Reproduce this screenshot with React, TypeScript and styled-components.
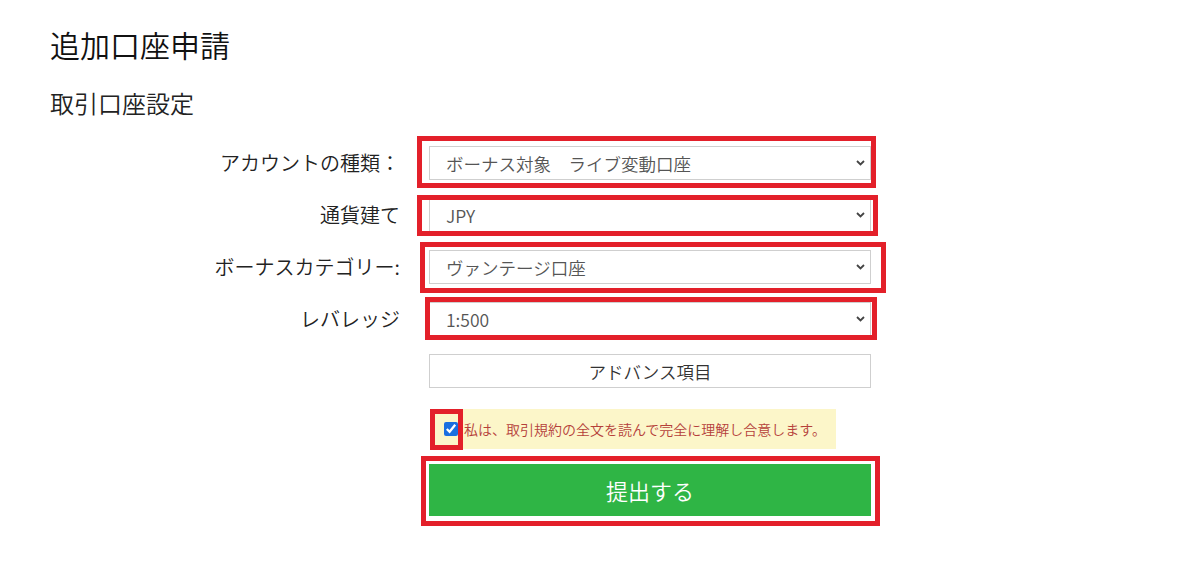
import React from "react";
import styled, { createGlobalStyle } from "styled-components";

const GlobalStyle = createGlobalStyle`
  html, body {
    margin: 0;
    padding: 0;
    background: #ffffff;
  }
  body {
    font-family: "Noto Sans CJK JP", "Noto Sans", sans-serif;
    font-weight: 350;
    color: #222;
  }
`;

const Page = styled.div`
  padding: 29px 0 40px 50px;
  display: flex;
  flex-direction: column;
`;

const Title = styled.h1`
  margin: 0;
  font-size: 30px;
  line-height: 30px;
  font-weight: 350;
  color: #111;
`;

const SubTitle = styled.h2`
  margin: 32px 0 0 0;
  font-size: 24px;
  line-height: 24px;
  font-weight: 350;
  color: #222;
`;

const Form = styled.form`
  margin-top: 31px;
  display: flex;
  flex-direction: column;
  gap: 18px;
`;

const Row = styled.div<{ $mt?: number }>`
  display: grid;
  grid-template-columns: 350px 442px;
  column-gap: 29px;
  align-items: center;
  margin-top: ${(p) => p.$mt ?? 0}px;
`;

const Label = styled.label`
  text-align: right;
  font-size: 20px;
  line-height: 24px;
  color: #222;
  white-space: nowrap;
`;

const Field = styled.div`
  position: relative;
  height: 34px;
`;

const Select = styled.select`
  appearance: none;
  -webkit-appearance: none;
  width: 100%;
  height: 34px;
  box-sizing: border-box;
  border: 1px solid #cfcfcf;
  border-radius: 0;
  background: #fff;
  padding: 0 30px 0 16px;
  font-family: "Noto Sans CJK JP", "Noto Sans", sans-serif;
  font-weight: 350;
  font-size: 17.5px;
  color: #555;
  outline: none;
`;

const Chevron = styled.svg`
  position: absolute;
  right: 6px;
  top: 50%;
  width: 9px;
  height: 6px;
  margin-top: -3px;
  pointer-events: none;
`;

const Highlight = styled.span<{ $t: number; $r: number; $b: number; $l: number }>`
  position: absolute;
  top: ${(p) => p.$t}px;
  right: ${(p) => p.$r}px;
  bottom: ${(p) => p.$b}px;
  left: ${(p) => p.$l}px;
  border: 5px solid #e3202a;
  pointer-events: none;
`;

const AdvancedButton = styled.button`
  width: 100%;
  height: 34px;
  box-sizing: border-box;
  border: 1px solid #cfcfcf;
  border-radius: 0;
  background: #fff;
  font-family: "Noto Sans CJK JP", "Noto Sans", sans-serif;
  font-weight: 350;
  font-size: 17.5px;
  color: #333;
  padding: 0;
  cursor: pointer;
`;

const AgreeBox = styled.div`
  position: relative;
  margin-left: 1px;
  width: 406px;
  height: 40px;
  box-sizing: border-box;
  background: #fcf6c9;
  display: flex;
  align-items: center;
  padding-left: 14px;
  gap: 6px;
`;

const CheckWrap = styled.span`
  position: relative;
  display: flex;
  align-items: center;
`;

const Checkbox = styled.input`
  margin: 0;
  width: 14px;
  height: 14px;
  accent-color: #1a6fe0;
`;

const AgreeText = styled.span`
  font-size: 14px;
  line-height: 16px;
  color: #b5403a;
  white-space: nowrap;
`;

const SubmitField = styled.div`
  position: relative;
  height: 52px;
`;

const SubmitButton = styled.button`
  width: 100%;
  height: 52px;
  border: none;
  border-radius: 0;
  background: #2fb545;
  color: #fff;
  font-family: "Noto Sans CJK JP", "Noto Sans", sans-serif;
  font-weight: 350;
  font-size: 22px;
  cursor: pointer;
  padding: 0;
`;

type Opt = {
  label: string;
  value: string;
  hl: [number, number, number, number];
};

const selects: Opt[] = [
  { label: "アカウントの種類：", value: "ボーナス対象　ライブ変動口座", hl: [-10, -5, -8, -12] },
  { label: "通貨建て", value: "JPY", hl: [-3, -7, -4, -12] },
  { label: "ボーナスカテゴリー:", value: "ヴァンテージ口座", hl: [-8, -15, -9, -9] },
  { label: "レバレッジ", value: "1:500", hl: [-5, -6, -4, -4] },
];

const ChevronIcon = () => (
  <Chevron viewBox="0 0 9 6">
    <path d="M1 1 L4.5 4.5 L8 1" fill="none" stroke="#444" strokeWidth="1.8" />
  </Chevron>
);

export default function App() {
  return (
    <>
      <GlobalStyle />
      <Page>
        <Title>追加口座申請</Title>
        <SubTitle>取引口座設定</SubTitle>
        <Form onSubmit={(e) => e.preventDefault()}>
          {selects.map((s) => (
            <Row key={s.label}>
              <Label>{s.label}</Label>
              <Field>
                <Select defaultValue={s.value}>
                  <option value={s.value}>{s.value}</option>
                </Select>
                <ChevronIcon />
                <Highlight $t={s.hl[0]} $r={s.hl[1]} $b={s.hl[2]} $l={s.hl[3]} />
              </Field>
            </Row>
          ))}
          <Row>
            <span />
            <Field>
              <AdvancedButton type="button">アドバンス項目</AdvancedButton>
            </Field>
          </Row>
          <Row $mt={3}>
            <span />
            <AgreeBox>
              <CheckWrap>
                <Checkbox type="checkbox" defaultChecked />
              </CheckWrap>
              <AgreeText>私は、取引規約の全文を読んで完全に理解し合意します。</AgreeText>
              <Highlight $t={0} $r={373} $b={-1} $l={0} />
            </AgreeBox>
          </Row>
          <Row $mt={-3}>
            <span />
            <SubmitField>
              <SubmitButton type="submit">提出する</SubmitButton>
              <Highlight $t={-8} $r={-9} $b={-10} $l={-8} />
            </SubmitField>
          </Row>
        </Form>
      </Page>
    </>
  );
}
